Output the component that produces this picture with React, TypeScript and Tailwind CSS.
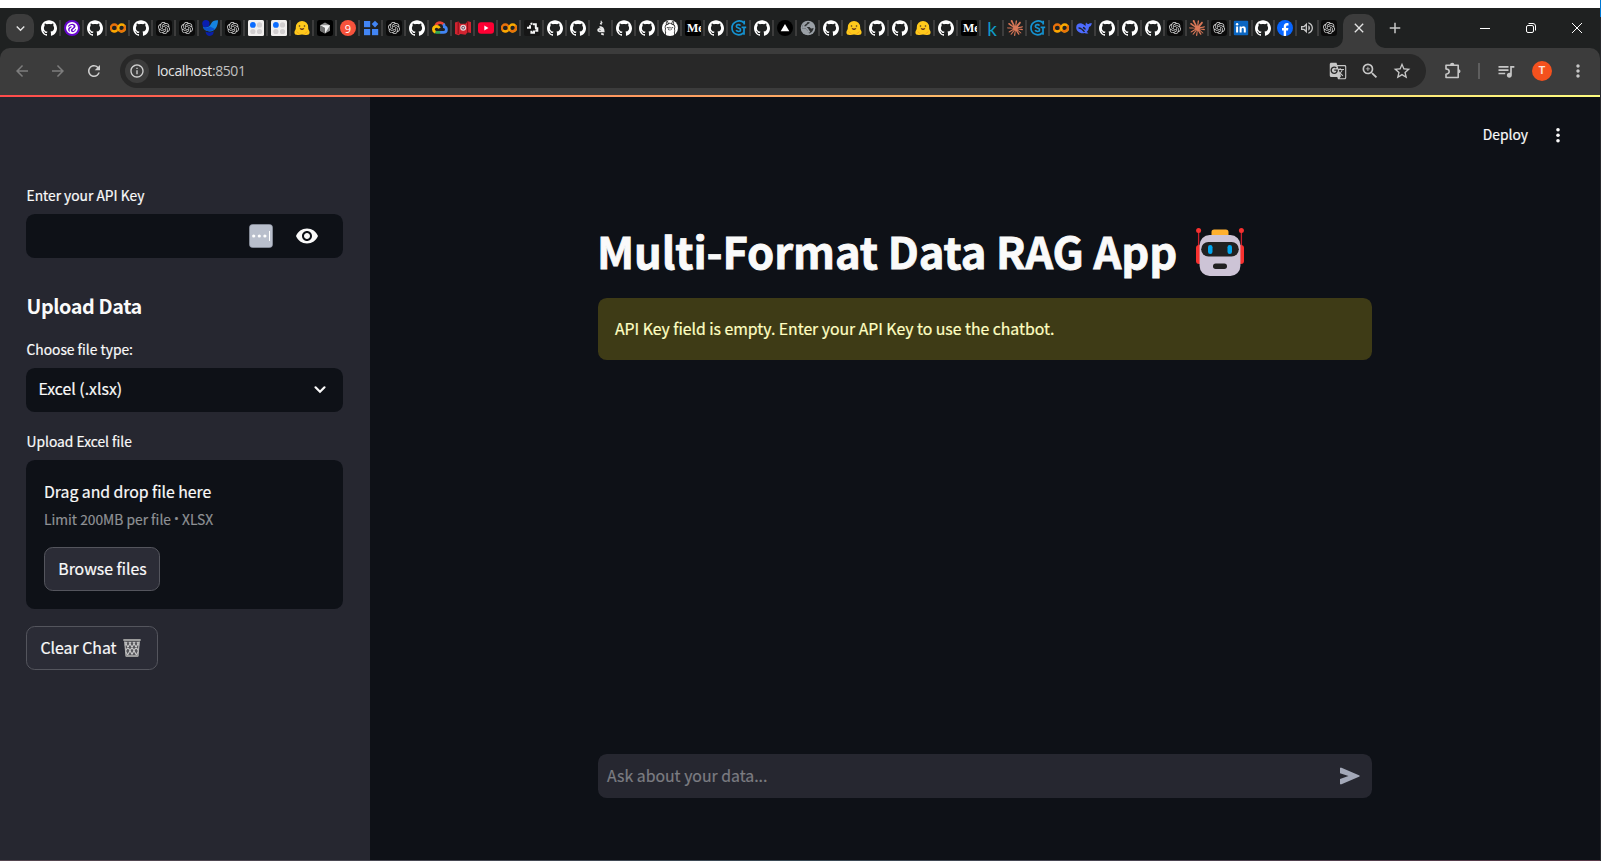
import React from "react";
import { SiGithub, SiOpenai, SiRoboflow, SiOllama, SiClaude } from "react-icons/si";
import {
  MdArrowBack,
  MdArrowForward,
  MdRefresh,
  MdOutlineInfo,
  MdStarBorder,
  MdOutlineZoomIn,
  MdQueueMusic,
  MdMoreVert,
  MdGTranslate,
  MdOutlineVolumeUp,
  MdVisibility,
  MdExpandMore,
  MdClose,
  MdAdd,
} from "react-icons/md";

type Kind =
  | "gh" | "robo" | "colab" | "gpt" | "bird" | "dots" | "hug" | "cube" | "nine" | "blocks"
  | "cloud" | "news" | "yt" | "knot" | "accent" | "llama" | "me" | "sg" | "tri" | "globe"
  | "kay" | "burst" | "whale" | "in" | "fb" | "sound";

const wideTabs: Kind[] = [
  "gh", "robo", "gh", "colab", "gh", "gpt", "gpt", "bird", "gpt", "dots", "dots", "hug", "cube",
  "nine", "blocks", "gpt", "gh", "cloud", "news", "yt", "colab", "knot", "gh", "gh", "accent",
  "gh", "gh", "llama", "me", "gh", "sg", "gh", "tri", "globe", "gh", "hug", "gh", "gh", "hug",
  "gh", "me", "kay", "burst", "sg", "colab", "whale", "gh", "gh", "gh",
];
const narrowTabs: Kind[] = ["gpt", "burst", "gpt", "in", "gh", "fb", "sound", "gpt"];

function Favicon({ kind }: { kind: Kind }) {
  switch (kind) {
    case "gh":
      return <SiGithub className="size-4 text-white" />;
    case "gpt":
      return (
        <span className="flex size-4 items-center justify-center rounded-[3px] bg-[#0b0b0b]">
          <SiOpenai className="size-3 text-[#d6d6d6]" />
        </span>
      );
    case "robo":
      return (
        <span className="flex size-4 items-center justify-center rounded-full bg-[#6706ce]">
          <SiRoboflow className="size-3 text-white" />
        </span>
      );
    case "llama":
      return (
        <span className="flex size-4 items-center justify-center rounded-full bg-white">
          <SiOllama className="size-3.5 text-[#222]" />
        </span>
      );
    case "burst":
      return <SiClaude className="size-4 text-[#d97757]" />;
    case "colab":
      return (
        <svg viewBox="0 0 16 16" className="size-4" fill="none" strokeWidth="2.300">
          <circle cx="4.300" cy="8" r="3.500" stroke="#e8710a" />
          <path d="M1.800 10.400A3.500 3.500 0 0 0 7 10.200" stroke="#f9ab00" />
          <circle cx="11.700" cy="8" r="3.500" stroke="#f9ab00" />
          <path d="M9.200 10.400A3.500 3.500 0 0 0 14.200 5.600" stroke="#e8710a" />
        </svg>
      );
    case "bird":
      return (
        <svg viewBox="0 0 16 16" className="size-4">
          <path d="M.8 6.500C4 8 7.800 7 9.200 3.500 10.300.8 13 0 16 .2 15.800 7 13 11.200 8 11.400 4.500 11.500 1.800 10 .8 6.500z" fill="#1583e0" />
          <path d="M.8 6.500C4 8 6 8 8 6.500L13 9C10 12 2.500 12.500 .8 6.500z" fill="#0b50cc" />
          <circle cx="3.900" cy="3.600" r="3.600" fill="#0a1fb0" />
          <path d="M3.500 11.500c3 1.200 6 1.200 8.300-.2-.2 2.800-1.500 4.700-4 4.700s-4-1.700-4.300-4.500z" fill="#0a1fa8" />
        </svg>
      );
    case "dots":
      return (
        <svg viewBox="0 0 16 16" className="size-4">
          <rect width="16" height="16" rx="1.500" fill="#f1efee" />
          <circle cx="4.900" cy="4.900" r="2.900" fill="#0a6cff" />
          <circle cx="11.500" cy="4.900" r="2.600" fill="#d2cfd0" />
          <circle cx="4.900" cy="11.500" r="2.600" fill="#d2cfd0" />
          <circle cx="11.500" cy="11.500" r="2.600" fill="#d2cfd0" />
        </svg>
      );
    case "hug":
      return (
        <svg viewBox="0 0 16 16" className="size-4">
          <path d="M8 1a6.200 6.200 0 0 1 6.200 6.300c0 1.200-.1 2 .8 3.200 1 1.500.8 4.300-1.500 4.300-2 .3-3.500.2-5.500-.3-2 .5-3.500.6-5.500.3C.2 14.800 0 12 1 10.500c.9-1.200.8-2 .8-3.200A6.200 6.200 0 0 1 8 1z" fill="#ffc91c" />
          <path d="M5.600 7.800c1.600.8 3.200.8 4.800 0-.3 1.600-1.200 2.300-2.400 2.300s-2.100-.7-2.400-2.300z" fill="#6b3b1c" />
          <circle cx="5.500" cy="6" r=".8" fill="#4b3a26" />
          <circle cx="10.500" cy="6" r=".8" fill="#4b3a26" />
          <path d="M2.500 11.500l3 2.500M13.500 11.500l-3 2.500" stroke="#f29a1a" strokeWidth=".8" />
        </svg>
      );
    case "cube":
      return (
        <svg viewBox="0 0 16 16" className="size-4">
          <rect width="16" height="16" rx="2.500" fill="#000" />
          <path d="M8 2.500l5 2.800v5.400l-5 2.800-5-2.800V5.300z" fill="#8d8d8d" />
          <path d="M3 5.300h10L8 13.500V8z" fill="#f2f2f2" />
          <path d="M3 5.300L8 8v5.500l-5-2.800z" fill="#6f6f6f" />
        </svg>
      );
    case "nine":
      return (
        <span className="flex size-4 items-center justify-center rounded-full bg-[#f6523c] font-['Open_Sans',sans-serif] text-[11px] leading-none text-white">
          9
        </span>
      );
    case "blocks":
      return (
        <svg viewBox="0 0 16 16" className="size-4" fill="#4285f4">
          <rect x="1" y="1" width="6.200" height="6.200" />
          <rect x="1" y="9" width="6.200" height="6.200" />
          <rect x="9" y="9" width="6.200" height="6.200" />
          <path d="M12 .8l3.300 3.300L12 7.400 8.700 4.100z" />
        </svg>
      );
    case "cloud":
      return (
        <svg viewBox="0 0 16 16" className="size-4" fill="none" strokeWidth="2.800">
          <path d="M3.700 5.700C4.500 3.500 6 2.600 8 2.600c1.500 0 2.800.6 3.700 1.900" stroke="#ea4335" />
          <path d="M11.300 4c.8.800 1.100 1.700 1.100 2.800 1.300.3 2 1.200 2 2.600 0 1.800-1.100 3-3 3H8" stroke="#4285f4" />
          <path d="M8.200 12.400H4.600c-.7 0-1.300-.2-1.800-.5" stroke="#34a853" />
          <path d="M3.400 12.100C2 11.500 1.400 10.700 1.400 9.400c0-2 1.500-3.100 3.200-3.100 1.600 0 2.400.9 2.800 2" stroke="#fbbc05" />
        </svg>
      );
    case "news":
      return (
        <svg viewBox="0 0 16 16" className="size-4">
          <path d="M0 2.500l3.500-1 2 2.300h5l2.200-2.500L16 2v11l-3.500-.8-2 2.500-5-.8-2 1.300L0 14z" fill="#d02430" />
          <path d="M3.200 2v12M12.600 1.800v11" stroke="#8c0f18" strokeWidth="1.100" />
          <circle cx="8.200" cy="7.700" r="3" fill="#ecd6d8" />
          <circle cx="8.200" cy="7.700" r="1.400" fill="none" stroke="#5f4a60" strokeWidth="1" />
        </svg>
      );
    case "yt":
      return (
        <svg viewBox="0 0 16 16" className="size-4">
          <rect y="2.200" width="16" height="11.600" rx="3" fill="#ff0033" />
          <path d="M6.300 5.600v4.800L10.500 8z" fill="#fff" />
        </svg>
      );
    case "knot":
      return (
        <svg viewBox="0 0 16 16" className="size-4" fill="none">
          <rect width="16" height="16" rx="2" fill="#161616" />
          <path d="M3 7.700h3V5.200M6.500 4l2-.5M9 4.300h2.800v4M11 8.300h2.300v2.500h-2M10 10.500v2.300H7.400v-2" stroke="#f4f4f4" strokeWidth="2" />
        </svg>
      );
    case "accent":
      return (
        <svg viewBox="0 0 16 16" className="size-4" fill="none" stroke="#e9e9e9">
          <path d="M8.200.8v4M7 3.800l2.400-1.200" strokeWidth="1.100" />
          <path d="M6.500 6.800c3 .2 4.200 2 4.200 4.600H6.300c-2-.4-1.300-2.600.2-2.600 1.600 0 2.800 1 2.800 2.600" strokeWidth="1.700" />
          <path d="M8.200 13.600l2.600 1" strokeWidth="1.700" />
        </svg>
      );
    case "me":
      return (
        <span className="flex size-4 items-center overflow-hidden rounded-[2px] bg-black pl-[2px] font-['Liberation_Serif',serif] text-[12px] leading-none font-bold text-white">
          Me
        </span>
      );
    case "sg":
      return (
        <svg viewBox="0 0 16 16" className="size-4" fill="none" stroke="#1593d2">
          <path d="M13.200 3C9-1 1 1.300 1 8c0 6.600 7.500 8.600 11.500 4.800" strokeWidth="1.700" />
          <path d="M9.500 5.600C8.600 4.200 5.300 4.300 5.300 6.200c0 2.200 4.300 1.500 4.300 3.700 0 2-3.600 2-4.500.3" strokeWidth="1.600" />
          <path d="M10.600 7.400H15.200M13 7.400v7.400M13.200.8v3.700" strokeWidth="1.700" />
        </svg>
      );
    case "tri":
      return (
        <svg viewBox="0 0 16 16" className="size-4">
          <circle cx="8" cy="8" r="8" fill="#000" />
          <path d="M8 3.900l4.300 7.300H3.700z" fill="#fff" />
        </svg>
      );
    case "globe":
      return (
        <svg viewBox="0 0 16 16" className="size-4">
          <circle cx="8" cy="8" r="7.300" fill="#9aa0a6" />
          <path d="M2 8.200C1.800 5 4.500 2.400 7.500 2.200L9.500 2c.2 1.500-.5 1.700-1.600 2-.6.200-.2 1.300-1.400 1.500-1 .2-.7 1.400.3 1.500h2.400c1 0 1.200 1.300 2 1.500.8.200 1.800-.2 2.400-.4-.2 2.600-2 4.800-4.600 5.300-.2-1.400-.3-2-1.200-2.400-.9-.4-.8-1.500-1.400-2.100C5.500 8 3.500 8.400 2 8.200z" fill="#2b2d2e" />
          <path d="M6.800 2.200C5 3.200 3 5 3 7.200h3C6.300 8.500 7.500 8.500 8 10c.3 1 1.300 1.300 1.400 2.500" stroke="#9aa0a6" strokeWidth="1.800" fill="none" />
        </svg>
      );
    case "kay":
      return (
        <span className="flex size-4 items-center justify-center font-['Lato',sans-serif] text-[19px] leading-none text-[#0f9bc6]">
          k
        </span>
      );
    case "whale":
      return (
        <svg viewBox="0 0 16 16" className="size-4">
          <path d="M.2 7.500C.2 4.300 2.800 3 5.600 3.400c1.800.3 2.600 1.500 4 2.500.1-1.300-.2-2.400.6-3.400.5 1.200 1.600 1.500 2.600 1.500.7-.6 1.500-.7 3-.9-.2 2.300-1.300 3.500-2.800 3.900-.2 2.400-1 3.800-2.400 5 .6.500 1.200.7 1.800 1.200-1.200.6-2.500.3-3.600-.2C4.300 14.200.2 11.200.2 7.500z" fill="#4d6bfe" />
          <path d="M2.500 7.800c2.400.2 4.300 1.800 6 4M7 7.500c1 .2 1.900.8 2.400 1.900" fill="none" stroke="#1f2121" strokeWidth="1.300" />
        </svg>
      );
    case "in":
      return (
        <svg viewBox="0 0 16 16" className="size-4">
          <rect x=".8" y=".8" width="14.400" height="14.400" rx="1" fill="#0a66c2" />
          <circle cx="4.100" cy="4.300" r="1.200" fill="#fff" />
          <path d="M3.100 6.400h2v6.200h-2zM6.600 6.400h1.900v.9c.9-1.500 4.300-1.500 4.300 1.700v3.600h-2V9.400c0-1.900-2.200-1.700-2.200 0v3.200h-2z" fill="#fff" />
        </svg>
      );
    case "fb":
      return (
        <svg viewBox="0 0 16 16" className="size-4">
          <circle cx="8" cy="8" r="8" fill="#0866ff" />
          <path d="M6.700 16v-5.400H5V8.100h1.700V7c0-2.700 1.200-4 3.800-3.900l1 .1v2.200h-.9c-1.200 0-1.500.5-1.500 1.600v1.100h2.300l-.4 2.500H9.100V16z" fill="#fff" />
        </svg>
      );
    case "sound":
      return <MdOutlineVolumeUp className="size-4 text-[#c7c7c7]" />;
  }
}

function TabStrip() {
  return (
    <div className="flex h-10 shrink-0 bg-[#1f2121] pl-1.5">
      <div className="mt-1.5 flex size-7 items-center justify-center rounded-[10px] bg-[#3c3c3c]">
        <MdExpandMore className="size-[17px] text-[#e3e3e3]" />
      </div>
      <div className="flex h-10 items-center pl-[7px]">
        {wideTabs.map((k, i) => (
          <div key={i} className="flex w-[23px] items-center gap-0.5">
            <Favicon kind={k} />
            <span className="h-4 w-0.5 bg-[#3c3c3c]" />
          </div>
        ))}
      </div>
      <div className="-ml-px flex h-10 items-center">
        {narrowTabs.map((k, i) => (
          <div key={i} className="flex w-[22px] items-center gap-0.5">
            <Favicon kind={k} />
            {i < narrowTabs.length - 1 && <span className="h-4 w-0.5 bg-[#3c3c3c]" />}
          </div>
        ))}
      </div>
      <div className="relative mt-1.5 flex h-[34px] w-8 items-start justify-center rounded-t-[10px] bg-[#3c3c3c] pt-1.5">
        <MdClose className="size-4 text-[#e3e3e3]" />
        <svg viewBox="0 0 10 10" className="absolute bottom-0 -left-2.5 size-2.5" fill="#3c3c3c">
          <path d="M10 0v10H0A10 10 0 0 0 10 0z" />
        </svg>
        <svg viewBox="0 0 10 10" className="absolute -right-2.5 bottom-0 size-2.5" fill="#3c3c3c">
          <path d="M0 0v10h10A10 10 0 0 1 0 0z" />
        </svg>
      </div>
      <div className="flex h-10 items-center pl-[11px]">
        <MdAdd className="size-[18px] text-[#c7c7c7]" />
      </div>
      <div className="ml-auto flex h-10 items-center gap-9 pr-[18px]">
        <svg viewBox="0 0 10 10" className="size-2.5" stroke="#fff" fill="none">
          <path d="M0 5.500h10" />
        </svg>
        <svg viewBox="0 0 10 10" className="size-2.5" stroke="#fff" fill="none">
          <rect x=".5" y="2.500" width="7" height="7" rx="1.500" />
          <path d="M2.500.5h4.500a2.500 2.500 0 0 1 2.500 2.500v4.500" />
        </svg>
        <svg viewBox="0 0 10 10" className="size-2.5" stroke="#fff" fill="none">
          <path d="M0 0l10 10M10 0L0 10" />
        </svg>
      </div>
    </div>
  );
}

function Toolbar() {
  return (
    <div className="h-[47px] shrink-0 bg-[#1f2121]">
      <div className="flex h-[47px] items-center rounded-t-[10px] bg-[#3c3c3c] pb-[1px] pl-[13px]">
        <MdArrowBack className="size-[18px] text-[#7d7d7d]" />
        <MdArrowForward className="ml-[18px] size-[18px] text-[#7d7d7d]" />
        <MdRefresh className="ml-[18px] size-[18px] text-[#cfcfcf]" />
        <div className="ml-[17px] flex h-[34px] w-[1306px] items-center rounded-full bg-[#282828] pl-[5px]">
          <span className="flex size-6 items-center justify-center rounded-full bg-[#3c3c3c]">
            <MdOutlineInfo className="size-4 text-[#d0d0d0]" />
          </span>
          <span className="ml-2 pb-[2px] font-['Open_Sans','Noto_Sans',sans-serif] text-[14px] tracking-[-0.42px] text-[#e3e3e3]">
            localhost<span className="text-[#c0c0c0]">:8501</span>
          </span>
          <MdGTranslate className="ml-auto size-[18px] text-[#c7c7c7]" />
          <MdOutlineZoomIn className="ml-[13px] size-[20px] text-[#c7c7c7]" />
          <MdStarBorder className="mr-[14px] ml-[12px] size-[20px] text-[#c7c7c7]" />
        </div>
        <svg viewBox="0 0 18 18" className="ml-[18px] size-[18px]" fill="none" stroke="#c7c7c7" strokeWidth="1.600" strokeLinejoin="round">
          <path d="M2 3.300h12.200v12.200H2v-3.300c2.600-.3 3.200-1.300 3.200-2.600S4.600 7.200 2 6.900z" />
          <path d="M6 3a2.200 2.200 0 0 1 4.400 0zM14.500 7.200a2 2 0 0 1 0 4z" fill="#c7c7c7" stroke="none" />
        </svg>
        <span className="ml-4 h-4 w-0.5 bg-[#5e5e5e]" />
        <MdQueueMusic className="ml-[16px] size-[20px] text-[#c7c7c7]" />
        <span className="ml-4 flex size-5 items-center justify-center rounded-full bg-[#f4511e] font-['Roboto',sans-serif] text-[11px] font-bold text-[#fbe0d8]">
          T
        </span>
        <MdMoreVert className="ml-[16px] size-[20px] text-[#c7c7c7]" />
      </div>
    </div>
  );
}

function TrashBasket() {
  return (
    <svg viewBox="0 0 18 18" className="size-[18px]" fill="none">
      <path d="M1.500 2h15l-1.300 15.500H2.800z" fill="#55555a" />
      <path d="M2 3l8 14M6 3l8 14M10 3l5.500 9M14 3l2 3.500M16 3L8 17M12 3L4 17M8 3l-5.500 9M4 3L2 6.500M2.500 12l2.500 5M15.500 12L13 17" stroke="#c9c9c9" strokeWidth="1.100" />
      <path d="M1.700 2.500l1.400 14.700M16.300 2.500l-1.400 14.700" stroke="#b5b5b5" strokeWidth="1.200" />
      <path d="M.3 1h17.400M2.800 17h12.400" stroke="#9b9b9b" strokeWidth="1.900" />
    </svg>
  );
}

function Robot() {
  return (
    <svg viewBox="0 0 48 48" className="size-12">
      <path d="M2.600 3v20M45.400 3v20" stroke="#c9202b" strokeWidth="1.300" />
      <circle cx="2.600" cy="2.600" r="2.500" fill="#f8312f" />
      <circle cx="45.400" cy="2.600" r="2.500" fill="#f8312f" />
      <rect x="0" y="17" width="6" height="19" rx="3" fill="#f8312f" />
      <rect x="42" y="17" width="6" height="19" rx="3" fill="#f8312f" />
      <rect x="15.500" y="1.500" width="17" height="8" rx="2.600" fill="#ffb02e" />
      <rect x="3.600" y="7" width="40.800" height="41" rx="10" fill="#cdc4d6" />
      <rect x="5.200" y="14" width="37.600" height="14.500" rx="7.250" fill="#212121" />
      <rect x="12" y="17" width="4.500" height="9" rx="2.200" fill="#00a6ed" />
      <rect x="31.500" y="17" width="4.500" height="9" rx="2.200" fill="#00a6ed" />
      <rect x="17" y="35.500" width="14" height="5.500" rx="2.700" fill="#212121" />
    </svg>
  );
}

function Sidebar() {
  return (
    <aside className="flex w-[370px] shrink-0 flex-col bg-[#262730] pt-[86px] pr-[27px] pl-[26px] [-webkit-text-stroke:0.2px]">
      <label className="flex h-6 items-center pl-[0.5px] text-[13.800px]">Enter your API Key</label>
      <div className="mt-[7px] flex h-11 items-center rounded-[8.800px] bg-[#0e1117] pr-[24px]">
        <svg viewBox="0 0 24 24" className="ml-auto size-6">
          <rect x=".5" y=".5" width="23" height="23" rx="3" fill="#b9bfcc" stroke="#98a0ae" strokeWidth=".6" />
          <circle cx="4.700" cy="12" r="1.600" fill="#fff" />
          <circle cx="10.300" cy="12" r="1.600" fill="#fff" />
          <circle cx="15.900" cy="12" r="1.600" fill="#fff" />
          <path d="M20.500 7v10" stroke="#fff" />
        </svg>
        <MdVisibility className="ml-[22px] size-6" />
      </div>
      <h2 className="mt-[34px] flex h-7 items-center pl-[0.5px] text-[19.800px] font-bold tracking-[-0.400px] [-webkit-text-stroke:0px]">
        Upload Data
      </h2>
      <label className="mt-[17px] flex h-6 items-center pl-[0.5px] text-[13.800px]">Choose file type:</label>
      <div className="mt-[7px] flex h-11 items-center justify-between rounded-[8.800px] bg-[#0e1117] pr-[13px] pb-[2px] pl-[12.500px] text-[15.840px]">
        Excel (.xlsx)
        <svg viewBox="0 0 20 20" className="size-5" fill="none" stroke="#fafafa" strokeWidth="2.200" strokeLinecap="round">
          <path d="M5.500 8.300l4.500 4.500 4.500-4.500" />
        </svg>
      </div>
      <label className="mt-[17px] flex h-6 items-center pl-[0.5px] text-[13.800px]">Upload Excel file</label>
      <section className="mt-[7px] flex h-[149px] flex-col items-start rounded-[8.800px] bg-[#0e1117] px-[18px] pt-[18px]">
        <span className="flex h-7 items-center text-[15.840px] tracking-[-0.04px]">Drag and drop file here</span>
        <span className="flex h-[26px] items-center text-[13.800px] whitespace-pre text-[#8f9195]">
          Limit 200MB per file <span className="font-['Open_Sans',sans-serif] text-[13px]">•</span> XLSX
        </span>
        <button className="mt-[15px] flex h-11 w-[116px] items-center justify-center rounded-[8.800px] border border-[#54555d] bg-[#2b2c36] pl-px text-[15.840px]">
          Browse files
        </button>
      </section>
      <button className="mt-[17px] flex h-11 w-[132px] items-center gap-[6px] rounded-[8.800px] border border-[#54555d] bg-[#2b2c36] pl-[13.500px] text-[15.840px]">
        Clear Chat
        <TrashBasket />
      </button>
    </aside>
  );
}

function Main() {
  return (
    <main className="flex grow flex-col [-webkit-text-stroke:0.2px]">
      <header className="flex h-[77px] shrink-0 items-center justify-end pr-[32px]">
        <span className="pb-[2px] text-[13.860px]">Deploy</span>
        <svg viewBox="0 0 20 20" className="ml-[20px] size-5" fill="#fafafa">
          <circle cx="10" cy="3.800" r="1.800" />
          <circle cx="10" cy="9.300" r="1.800" />
          <circle cx="10" cy="14.800" r="1.800" />
        </svg>
      </header>
      <div className="ml-[228px] flex w-[774px] grow flex-col">
        <h1 className="mt-[48px] flex h-[60px] items-center text-[43.560px] font-bold tracking-[-0.12px] whitespace-nowrap [-webkit-text-stroke:0.8px]">
          <span className="-ml-px w-[599px] pb-[2px]">Multi-Format Data RAG App</span>
          <Robot />
        </h1>
        <div className="mt-[16px] flex h-[62px] items-center rounded-[8.800px] bg-[#3e3b16] pl-[17px] text-[15.840px] tracking-[-0.03px] text-[#ffffc2]">
          API Key field is empty. Enter your API Key to use the chatbot.
        </div>
        <div className="mt-auto mb-[62px] flex h-11 items-center justify-between rounded-[8.800px] bg-[#262730] pr-[11px] pl-[9px] text-[15.840px] text-[#7c7d82]">
          Ask about your data...
          <svg viewBox="0 0 22 18" className="h-[18px] w-[22px]" fill="#a3a8b8">
            <path d="M1 .8 L2.500 .8 L20.500 8.600 Q20.900 9 20.500 9.400 L2.500 17.200 L1 17.200 V12 L9.500 9 L1 6.200z" />
          </svg>
        </div>
      </div>
    </main>
  );
}

export default function App() {
  return (
    <div className="flex h-[861px] w-[1601px] overflow-hidden bg-white">
      <div className="flex w-[1600px] shrink-0 flex-col pt-2 font-['Noto_Sans_CJK_SC',sans-serif] text-[#fafafa]">
        <TabStrip />
        <Toolbar />
        <div className="h-0.5 shrink-0 bg-linear-to-r from-[#ff4b4b] to-[#fffd80]" />
        <div className="flex grow bg-[#0e1117]">
          <Sidebar />
          <Main />
        </div>
        <div className="h-px shrink-0 bg-linear-to-r from-[#54454f] via-[#3a4a56] to-[#5a3a4a]" />
      </div>
      <div className="flex w-px flex-col">
        <span className="h-[17px] bg-[#0078d4]" />
        <span className="grow bg-[#26282c]" />
      </div>
    </div>
  );
}
